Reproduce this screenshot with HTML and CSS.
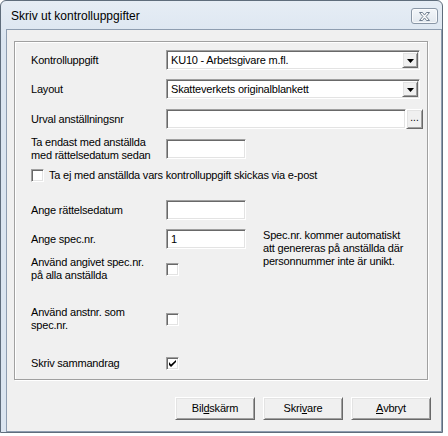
FILE: index.html
```html
<!DOCTYPE html>
<html lang="sv">
<head>
<meta charset="utf-8">
<title>Skriv ut kontrolluppgifter</title>
<link rel="stylesheet" href="styles.css">
</head>
<body>
<div class="window">
  <div class="titlebar">
    <span class="title">Skriv ut kontrolluppgifter</span>
    <span class="close">
      <svg width="11" height="9" viewBox="0 0 11 9"><path d="M0.5 0.5h3l2 2.6 2-2.6h3l-3.4 4 3.4 4h-3l-2-2.6-2 2.6h-3l3.4-4z" fill="#fff" stroke="#6f7d8e" stroke-width="1" stroke-linejoin="round"/></svg>
    </span>
  </div>
  <div class="client">
    <div class="group">
      <div class="row r1">
        <span class="label">Kontrolluppgift</span>
        <div class="sunken combo">
          <span class="value">KU10 - Arbetsgivare m.fl.</span>
          <span class="raised drop"><svg width="7" height="4" viewBox="0 0 7 4"><path d="M0 0h7L3.5 4z" fill="#000"/></svg></span>
        </div>
      </div>
      <div class="row r2">
        <span class="label">Layout</span>
        <div class="sunken combo">
          <span class="value">Skatteverkets originalblankett</span>
          <span class="raised drop"><svg width="7" height="4" viewBox="0 0 7 4"><path d="M0 0h7L3.5 4z" fill="#000"/></svg></span>
        </div>
      </div>
      <div class="row r3">
        <span class="label">Urval anställningsnr</span>
        <div class="sunken field wide"></div>
        <span class="raised dots">...</span>
      </div>
      <div class="row r4">
        <span class="label">Ta endast med anställda<br>med rättelsedatum sedan</span>
        <div class="sunken field short"></div>
      </div>
      <div class="row r5">
        <span class="sunken check"></span>
        <span class="checktext">Ta ej med anställda vars kontrolluppgift skickas via e-post</span>
      </div>
      <div class="row r6">
        <span class="label">Ange rättelsedatum</span>
        <div class="sunken field short"></div>
      </div>
      <div class="row r7">
        <span class="label">Ange spec.nr.</span>
        <div class="sunken field short"><span class="value">1</span></div>
        <span class="note">Spec.nr. kommer automatiskt<br>att genereras på anställda där<br>personnummer inte är unikt.</span>
      </div>
      <div class="row r8">
        <span class="label">Använd angivet spec.nr.<br>på alla anställda</span>
        <span class="sunken check"></span>
      </div>
      <div class="row r9">
        <span class="label">Använd anstnr. som<br>spec.nr.</span>
        <span class="sunken check"></span>
      </div>
      <div class="row r10">
        <span class="label">Skriv sammandrag</span>
        <span class="sunken check"><svg width="7" height="7" viewBox="0 0 7 7"><path d="M0 2v3l2 2 5-5V0L2 4.5z" fill="#000"/></svg></span>
      </div>
    </div>
    <div class="buttons">
      <span class="raised btn">Bil<u>d</u>skärm</span>
      <span class="raised btn">Skri<u>v</u>are</span>
      <span class="raised btn"><u>A</u>vbryt</span>
    </div>
  </div>
</div>
</body>
</html>
```

FILE: styles.css
```css
* { box-sizing: border-box; }

body {
  margin: 0;
  background: #fff;
  font-family: "Liberation Sans", Arial, sans-serif;
  font-size: 11px;
  letter-spacing: -0.2px;
  color: #000;
}

.window {
  width: 443px;
  height: 433px;
  border: 1px solid #5f6d7c;
  border-radius: 6px 6px 0 0;
  background: linear-gradient(#e6edf5, #dbe5f0 40px, #dbe5f0);
  display: flex;
  flex-direction: column;
}

.titlebar {
  height: 28px;
  display: flex;
  justify-content: space-between;
  align-items: flex-start;
  flex-shrink: 0;
}

.title {
  font-size: 12px;
  letter-spacing: 0;
  line-height: 16px;
  margin: 7px 0 0 10px;
  color: #000;
}

.close {
  width: 27px;
  height: 16px;
  margin: 7px 4px 0 0;
  border: 1px solid #8996a6;
  border-radius: 3px;
  background: linear-gradient(#f3f6fa, #e2e8ef);
  box-shadow: inset 0 0 0 1px rgba(255,255,255,0.7);
  display: flex;
  align-items: center;
  justify-content: center;
}

.client {
  flex: 1;
  margin-left: 5px;
  border: 1px solid #8e9db0;
  background: #f0f0f0;
  display: flex;
  flex-direction: column;
}

.group {
  width: 414px;
  height: 339px;
  margin: 11px 0 0 7px;
  border: 1px solid #a0a0a0;
  box-shadow: inset 1px 1px 0 #fff, 1px 1px 0 #fff;
  padding: 8px 0 0 16px;
  display: flex;
  flex-direction: column;
}

.row {
  display: flex;
  align-items: center;
  height: 20px;
  line-height: 13px;
}

.r2 { margin-top: 9px; }
.r3 { margin-top: 10px; }
.r4 { margin-top: 7px; height: 26px; }
.r5 { margin-top: 6px; height: 14px; }
.r6 { margin-top: 18px; }
.r7 { margin-top: 9px; }
.r8 { margin-top: 7px; height: 26px; }
.r9 { margin-top: 24px; height: 26px; }
.r10 { margin-top: 25px; height: 13px; }

.label {
  width: 135px;
  flex-shrink: 0;
  white-space: nowrap;
}

.sunken {
  border: 1px solid;
  border-color: #a0a0a0 #fff #fff #a0a0a0;
  box-shadow: inset 1px 1px 0 #696969, inset -1px -1px 0 #e3e3e3;
  background: #fff;
}

.raised {
  border: 1px solid;
  border-color: #fff #696969 #696969 #fff;
  box-shadow: inset 1px 1px 0 #e3e3e3, inset -1px -1px 0 #a0a0a0;
  background: #f0f0f0;
}

.combo {
  width: 254px;
  height: 20px;
  padding: 1px;
  display: flex;
  align-items: center;
}

.value {
  flex: 1;
  padding-left: 3px;
  line-height: 16px;
  white-space: nowrap;
}

.drop {
  width: 16px;
  height: 16px;
  display: flex;
  align-items: center;
  justify-content: center;
  padding-top: 1px;
}

.field {
  height: 20px;
  padding: 1px;
  display: flex;
  align-items: center;
}

.field.wide { width: 240px; }
.field.short { width: 80px; }

.dots {
  width: 17px;
  height: 20px;
  display: flex;
  align-items: flex-end;
  justify-content: center;
  line-height: 14px;
  padding-bottom: 3px;
  letter-spacing: 0;
  font-size: 10px;
}

.check {
  width: 13px;
  height: 13px;
  flex-shrink: 0;
  display: flex;
  align-items: center;
  justify-content: center;
}

.checktext {
  margin-left: 5px;
  white-space: nowrap;
}

.note {
  align-self: flex-start;
  margin-left: 17px;
  white-space: nowrap;
}

.buttons {
  display: flex;
  justify-content: flex-end;
  gap: 8px;
  margin-top: 17px;
  padding-right: 10px;
}

.btn {
  width: 80px;
  height: 23px;
  display: flex;
  align-items: center;
  justify-content: center;
  line-height: 13px;
}

.btn u { text-decoration-thickness: 1px; text-underline-offset: 1px; }
```
